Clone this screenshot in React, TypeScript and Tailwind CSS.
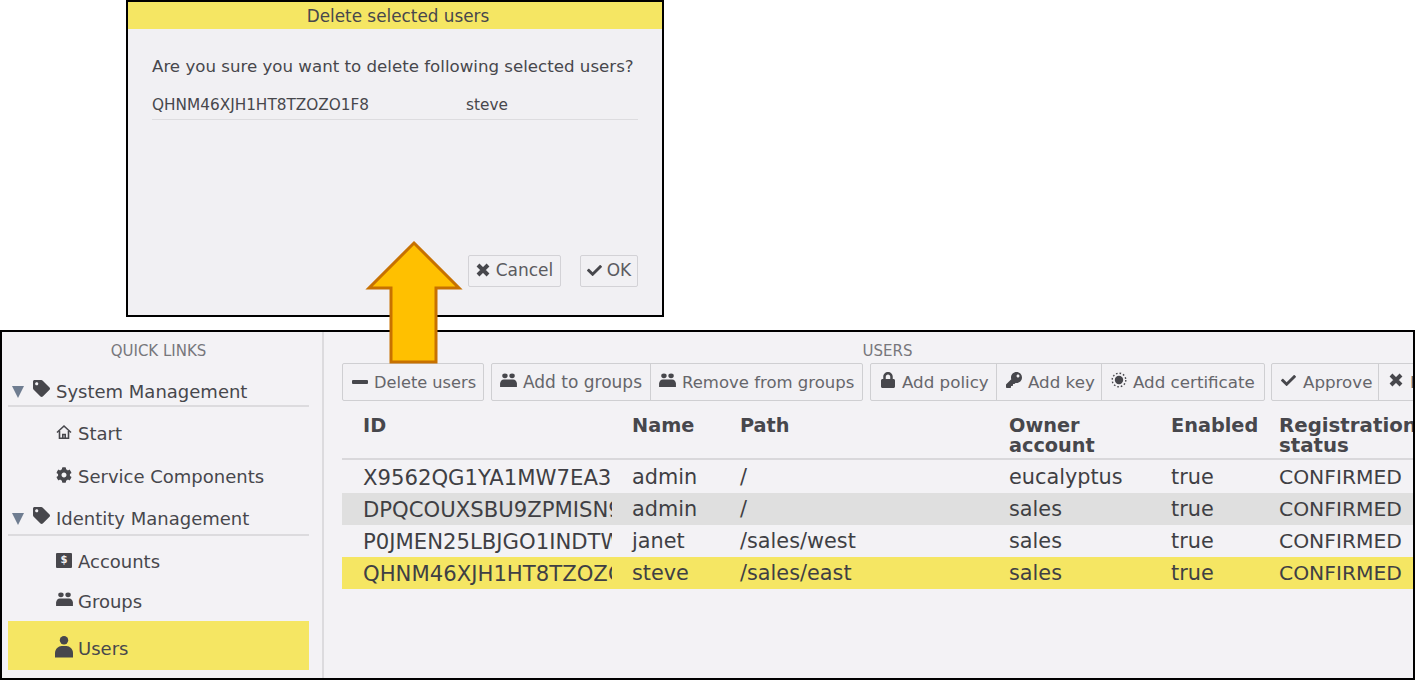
import { FaCheck, FaCog, FaKey, FaLock, FaTag } from "react-icons/fa";
import type { ReactNode } from "react";

const rows = [
  { id: "X9562QG1YA1MW7EA3", name: "admin", path: "/", owner: "eucalyptus", tone: "" },
  { id: "DPQCOUXSBU9ZPMISN9", name: "admin", path: "/", owner: "sales", tone: "bg-[#dfdfdf]" },
  { id: "P0JMEN25LBJGO1INDTW", name: "janet", path: "/sales/west", owner: "sales", tone: "" },
  { id: "QHNM46XJH1HT8TZOZO1F8", name: "steve", path: "/sales/east", owner: "sales", tone: "bg-[#f5e663]" },
];

function GroupIcon({ className }: { className?: string }) {
  return (
    <svg viewBox="0 0 18 16" className={className} fill="currentColor">
      <ellipse cx="5.2" cy="3" rx="2.9" ry="2.6" />
      <ellipse cx="12.8" cy="3" rx="2.9" ry="2.6" />
      <path d="M0 15V11.5C0 9.2 1.8 7 4 7H14C16.2 7 18 9.2 18 11.5V15Z" />
    </svg>
  );
}

function UserIcon() {
  return (
    <svg viewBox="0 0 18 22" className="h-[22px] w-[18px] -translate-x-px" fill="currentColor">
      <circle cx="9" cy="4.2" r="4.2" />
      <path d="M0 21.5V17C0 13 3.5 10 6.5 10H11.5C14.5 10 18 13 18 17V21.5Z" />
    </svg>
  );
}

function HomeIcon() {
  return (
    <svg viewBox="0 0 16 16" className="h-4 w-4" fill="none" stroke="currentColor" strokeWidth="1.6">
      <path d="M1 8.5L8 2l7 6.5" />
      <path d="M3.5 7v7.2h9V7" />
      <path d="M6.8 14v-3.5h2.4V14" />
    </svg>
  );
}

function SunIcon() {
  return (
    <svg viewBox="0 0 16 16" className="h-4 w-4" fill="currentColor">
      <circle cx="8" cy="8" r="4.2" />
      <circle cx="8" cy="8" r="6.8" fill="none" stroke="currentColor" strokeWidth="1.4" strokeDasharray="1.6 2" />
    </svg>
  );
}

function TimesIcon({ className }: { className?: string }) {
  return (
    <svg viewBox="0 0 14 14" className={className} fill="none" stroke="currentColor" strokeWidth="4">
      <path d="M2 2L12 12M12 2L2 12" />
    </svg>
  );
}

function TreeHeader({ label, className }: { label: string; className?: string }) {
  return (
    <div className={`flex h-[33px] items-center border-b-2 border-[#dcdbde] pl-[4px] ${className ?? ""}`}>
      <span className="h-0 w-0 border-x-[6px] border-t-[12px] border-x-transparent border-t-[#6f7d91]" />
      <FaTag className="mb-[6px] ml-[9px] h-[17px] w-[17px] text-[#47474c]" />
      <span className="ml-[6px] text-[18px] text-[#47474c]">{label}</span>
    </div>
  );
}

function TreeItem({ icon, label, selected, height }: { icon: ReactNode; label: string; selected?: boolean; height: string }) {
  return (
    <div className={`flex items-center pl-[48px] text-[18px] text-[#47474c] ${height} ${selected ? "bg-[#f5e663]" : ""}`}>
      <span className="mb-[3px] flex w-[22px] justify-start">{icon}</span>
      <span>{label}</span>
    </div>
  );
}

function ToolButton({
  icon,
  label,
  width,
  first,
  labelSize = "text-[16.7px]",
}: {
  icon: ReactNode;
  label: string;
  width: string;
  first?: boolean;
  labelSize?: string;
}) {
  return (
    <div className={`flex h-full shrink-0 items-center pt-[2px] pl-[8px] ${width} ${first ? "" : "border-l border-[#cfcfd2]"}`}>
      <span className="mr-[6px] mb-[6px] flex w-[17px] shrink-0 justify-center text-[#47474c]">{icon}</span>
      <span className={`whitespace-nowrap text-[#66666b] ${labelSize}`}>{label}</span>
    </div>
  );
}

function ToolGroup({ children, width, className }: { children: ReactNode; width: string; className?: string }) {
  return (
    <div className={`flex h-[38px] shrink-0 rounded-[2px] border border-[#cfcfd2] bg-[#f2f1f4] ${width} ${className ?? ""}`}>
      {children}
    </div>
  );
}

function HeaderCell({ children, size = "text-[19.3px]" }: { children: ReactNode; size?: string }) {
  return <div className={`leading-[20px] font-bold whitespace-nowrap text-[#47474c] ${size}`}>{children}</div>;
}

export default function App() {
  return (
    <div
      className="relative h-[680px] w-[1415px] overflow-hidden bg-white"
      style={{ fontFamily: '"DejaVu Sans", sans-serif' }}
    >
      {/* delete dialog */}
      <div className="ml-[126px] flex h-[317px] w-[538px] flex-col border-2 border-black bg-[#f1f0f3]">
        <div className="flex h-[27px] items-center justify-center bg-[#f5e663] pt-[2px] pl-[6px] text-[16.85px] text-[#47474c]">
          Delete selected users
        </div>
        <div className="flex flex-1 flex-col px-[24px]">
          <p className="mt-[26px] text-[16.65px] leading-[24px] whitespace-nowrap text-[#47474c]">
            Are you sure you want to delete following selected users?
          </p>
          <div className="mt-[13px] flex h-[28px] w-[486px] items-center border-b border-[#dddcdf] text-[15.3px] text-[#47474c]">
            <span className="w-[314px]">QHNM46XJH1HT8TZOZO1F8</span>
            <span>steve</span>
          </div>
          <div className="mt-[135px] flex w-[486px] justify-end gap-[19px]">
            <div className="flex h-[32px] w-[93px] items-center justify-center gap-[6px] rounded-[2px] border border-[#d3d2d6] text-[17px] text-[#5b5b60]">
              <TimesIcon className="mb-[3px] h-[14px] w-[14px] text-[#47474c]" />
              Cancel
            </div>
            <div className="flex h-[32px] w-[58px] items-center justify-center gap-[5px] rounded-[2px] border border-[#d3d2d6] text-[17px] text-[#5b5b60]">
              <FaCheck className="mb-[2px] h-[15px] w-[15px] text-[#47474c]" />
              OK
            </div>
          </div>
        </div>
      </div>

      {/* users page */}
      <div className="mt-[13px] flex h-[350px] w-[1415px] overflow-hidden border-2 border-black bg-[#f3f2f5]">
        <aside className="flex h-full w-[322px] shrink-0 flex-col border-r-2 border-[#dcdbde] pr-[13px] pl-[6px]">
          <div className="pt-[10px] text-center text-[15px] leading-[18px] text-[#77777c]">QUICK LINKS</div>
          <div className="mt-[14px]">
            <TreeHeader label="System Management" className="pt-[4px]" />
          </div>
          <TreeItem height="h-[43px] mt-[5px]" icon={<HomeIcon />} label="Start" />
          <TreeItem height="h-[43px]" icon={<FaCog className="h-[16px] w-[16px]" />} label="Service Components" />
          <div className="mt-[5px]">
            <TreeHeader label="Identity Management" />
          </div>
          <TreeItem
            height="h-[43px] mt-[4px]"
            icon={
              <span className="flex h-[15px] w-[16px] items-center justify-center rounded-[1px] bg-[#47474c] text-[10px] leading-none font-bold text-[#f1f0f3]">
                $
              </span>
            }
            label="Accounts"
          />
          <TreeItem height="h-[36px]" icon={<GroupIcon className="h-[15px] w-[17px]" />} label="Groups" />
          <TreeItem height="h-[49px] mt-[2px] pt-[6px]" selected icon={<UserIcon />} label="Users" />
        </aside>

        <main className="min-w-0 flex-1 overflow-hidden pl-[18px]">
          <div className="pt-[10px] pl-[20px] text-center text-[15px] leading-[18px] text-[#77777c]">USERS</div>
          <div className="mt-[3px] flex w-[1100px] gap-[7px]">
            <ToolGroup width="w-[142px]">
              <ToolButton
                first
                width="w-[140px]"
                labelSize="text-[16.2px]"
                icon={<span className="mt-[3px] block h-[4px] w-[16px] rounded-[1px] bg-[#47474c]" />}
                label="Delete users"
              />
            </ToolGroup>
            <ToolGroup width="w-[372px]">
              <ToolButton first width="w-[158px]" labelSize="text-[17px]" icon={<GroupIcon className="h-[15px] w-[17px]" />} label="Add to groups" />
              <ToolButton width="w-[213px]" labelSize="text-[16.5px]" icon={<GroupIcon className="h-[15px] w-[17px]" />} label="Remove from groups" />
            </ToolGroup>
            <ToolGroup width="w-[395px]">
              <ToolButton first width="w-[125px]" icon={<FaLock className="h-[16px] w-[14px]" />} label="Add policy" />
              <ToolButton width="w-[105px]" icon={<FaKey className="h-[16px] w-[16px]" />} label="Add key" />
              <ToolButton width="w-[164px]" icon={<SunIcon />} label="Add certificate" />
            </ToolGroup>
            <ToolGroup width="w-[200px]" className="-ml-px">
              <ToolButton first width="w-[106px]" icon={<FaCheck className="h-[15px] w-[15px]" />} label="Approve" />
              <ToolButton width="w-[92px]" icon={<TimesIcon className="h-[14px] w-[14px]" />} label="Reject" />
            </ToolGroup>
          </div>

          <div className="mt-[12px] grid h-[47px] w-[1100px] grid-cols-[290px_108px_269px_162px_108px_1fr] border-b-2 border-[#d9d8db] pt-[3px]">
            <HeaderCell><span className="pl-[21px]">ID</span></HeaderCell>
            <HeaderCell>Name</HeaderCell>
            <HeaderCell>Path</HeaderCell>
            <HeaderCell>Owner<br />account</HeaderCell>
            <HeaderCell>Enabled</HeaderCell>
            <HeaderCell size="text-[19.8px]">Registration<br />status</HeaderCell>
          </div>

          <div className="mt-[1px]">
            {rows.map((row) => (
              <div
                key={row.id}
                className={`grid h-[32px] w-[1100px] grid-cols-[290px_108px_269px_162px_108px_1fr] items-center pt-[1px] text-[20.8px] text-[#3f3f44] ${row.tone}`}
              >
                <div className="w-[270px] overflow-hidden pl-[21px] text-[21.2px] whitespace-nowrap">{row.id}</div>
                <div>{row.name}</div>
                <div>{row.path}</div>
                <div>{row.owner}</div>
                <div>true</div>
                <div className="text-[20.3px]">CONFIRMED</div>
              </div>
            ))}
          </div>
        </main>
      </div>

      {/* callout arrow */}
      <svg className="absolute top-[240px] left-[364px]" width="100" height="124" viewBox="0 0 100 124">
        <path d="M50 3L95 48H72V122H27V48H5Z" fill="#ffc000" stroke="#c77100" strokeWidth="3" />
      </svg>
    </div>
  );
}
